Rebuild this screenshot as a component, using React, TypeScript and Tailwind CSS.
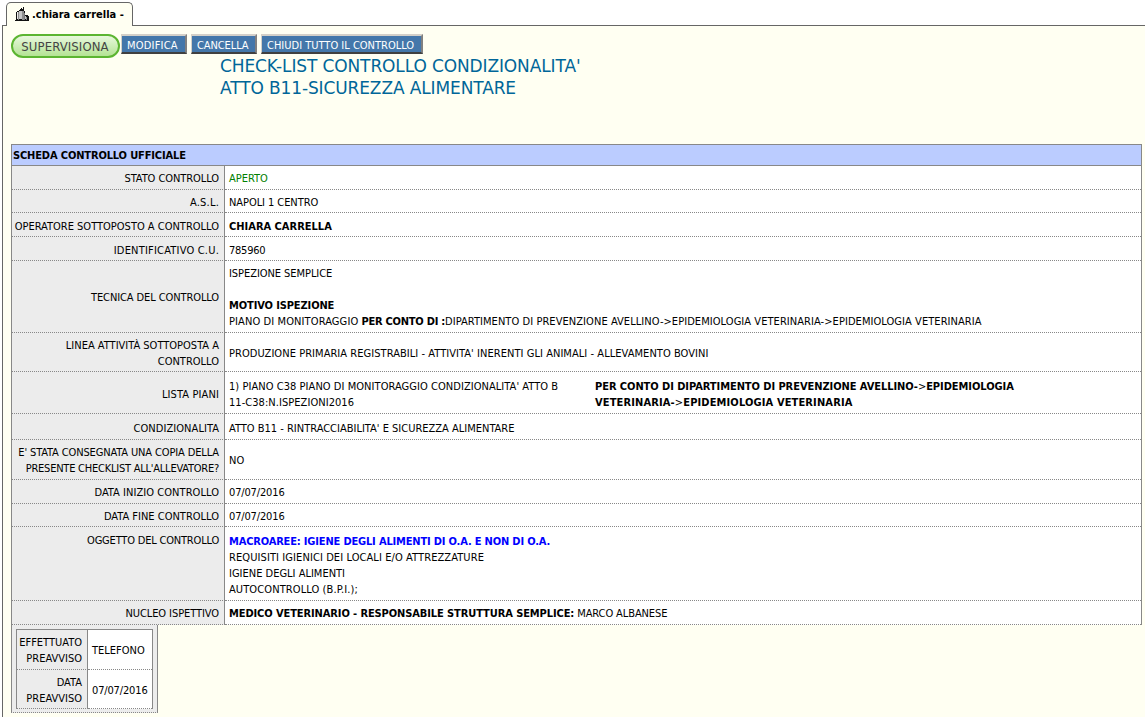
import type { ReactNode } from "react";

type RowProps = { label: ReactNode; h: string; children: ReactNode; top?: boolean; pad?: string };

function Row({ label, h, children, top, pad = "pt-[2px]" }: RowProps) {
  return (
    <div className={`flex ${h}`}>
      <div
        className={`flex w-[213px] shrink-0 justify-end border-b border-r border-b-[#888888] border-r-[#888888] bg-[#ececec] pr-[5px] text-right [border-bottom-style:dotted] ${top ? "items-start pt-[6px]" : `items-center ${pad}`}`}
      >
        <div>{label}</div>
      </div>
      <div className={`flex grow items-center border-b border-dotted border-b-[#888888] bg-white pl-[4px] ${pad}`}>{children}</div>
    </div>
  );
}

function Action({ w, children }: { w: string; children: ReactNode }) {
  return (
    <button
      className={`flex h-[20px] shrink-0 items-center whitespace-nowrap border-b-2 border-l border-r-2 border-t-2 border-t-[#d4d0c8] border-l-[#d4d0c8] border-r-[#808080] border-b-[#404040] bg-[#4477aa] pl-[5px] pt-[3px] text-white ${w}`}
    >
      {children}
    </button>
  );
}

export default function App() {
  return (
    <div className="h-[717px] w-[1145px] overflow-hidden bg-white font-['DejaVu_Sans_Condensed','DejaVu_Sans',sans-serif] text-[11px] leading-[16px] text-black">
      <div className="flex h-[26px] items-end pl-[2px]">
        <div className="h-px w-[4px] bg-[#666666]" />
        <div className="flex h-[24px] w-[127px] items-center gap-px whitespace-nowrap rounded-t-[5px] border border-b-0 border-[#666666] bg-[#fffff2] pl-[8px] font-bold">
          <svg width="16" height="16" viewBox="0 0 16 16" shapeRendering="crispEdges">
            <path d="M0 13h1V6l1-2h2V3l1-1h1V1h1v1h1V0h1v3l1 2v3h3l1 2v4H0z" fill="#111" />
            <path d="M2 5h1v7H2z" fill="#e8e8e8" />
            <path d="M3 5h1v8H3zM7 4h2v9H7zM11 10h1v3h-1z" fill="#8c8c8c" />
            <path d="M4 4h3v8H4zM10 9h1v3h-1z" fill="#c4c4c4" />
            <path d="M9 6h1v7H9z" fill="#777" />
          </svg>
          <span>.chiara carrella -</span>
        </div>
        <div className="h-px grow bg-[#666666]" />
      </div>
      <div className="ml-[2px] h-[691px] border-l border-[#666666] bg-[#fffff2] pl-[8px] pt-[8px]">
        <div className="flex h-[24px] items-start">
          <button className="mr-px flex h-[24px] w-[109px] shrink-0 items-center justify-center rounded-full border-2 border-[#5cb531] bg-linear-to-b from-[#e8f8dc] to-[#b4e394] pr-px pt-[2px] text-[13px] tracking-[0.1px] text-[#444444]">
            SUPERVISIONA
          </button>
          <Action w="w-[66px] mr-[4px] tracking-[0.2px]">MODIFICA</Action>
          <Action w="w-[66px] mr-[4px] -tracking-[0.1px]">CANCELLA</Action>
          <Action w="w-[162px]">CHIUDI TUTTO IL CONTROLLO</Action>
        </div>
        <div className="-mt-[3px] h-[89px] pl-[209px] font-['DejaVu_Sans',sans-serif] text-[17px] leading-[22px] -tracking-[0.12px] text-[#006699]">
          CHECK-LIST CONTROLLO CONDIZIONALITA'
          <br />
          ATTO B11-SICUREZZA ALIMENTARE
        </div>
        <div className="w-[1131px] border-x border-t border-[#888888]">
          <div className="flex h-[21px] items-center border-b border-[#888888] bg-[#bbccff] pl-px pt-px font-bold -tracking-[0.14px]">
            SCHEDA CONTROLLO UFFICIALE
          </div>
          <Row h="h-[24px]" label={<span className="-tracking-[0.07px]">STATO CONTROLLO</span>}>
            <span className="text-[#008000]">APERTO</span>
          </Row>
          <Row h="h-[23px]" pad="pt-[3px]" label={<span className="tracking-[0.2px]">A.S.L.</span>}>
            <span className="-tracking-[0.07px]">NAPOLI 1 CENTRO</span>
          </Row>
          <Row h="h-[24px]" pad="pt-[4px]" label="OPERATORE SOTTOPOSTO A CONTROLLO">
            <b>CHIARA CARRELLA</b>
          </Row>
          <Row h="h-[24px]" pad="pt-[4px]" label={<span className="tracking-[0.2px]">IDENTIFICATIVO C.U.</span>}>
            <span className="-tracking-[0.25px]">785960</span>
          </Row>
          <Row h="h-[72px]" label={<span className="-tracking-[0.1px]">TECNICA DEL CONTROLLO</span>}>
            <div>
              <div className="-tracking-[0.06px]">ISPEZIONE SEMPLICE</div>
              <div className="mt-[16px] font-bold -tracking-[0.12px]">MOTIVO ISPEZIONE</div>
              <div className="whitespace-nowrap tracking-[0.06px]">
                <span className="tracking-[0.1px]">PIANO DI MONITORAGGIO </span>
                <b className="-tracking-[0.25px]">PER CONTO DI :</b>
                DIPARTIMENTO DI PREVENZIONE AVELLINO-&gt;EPIDEMIOLOGIA VETERINARIA-&gt;EPIDEMIOLOGIA VETERINARIA
              </div>
            </div>
          </Row>
          <Row h="h-[39px]" pad="pt-[4px]" label={<>LINEA ATTIVITÀ SOTTOPOSTA A<br />CONTROLLO</>}>
            <span className="tracking-[0.05px]">PRODUZIONE PRIMARIA REGISTRABILI - ATTIVITA' INERENTI GLI ANIMALI - ALLEVAMENTO BOVINI</span>
          </Row>
          <Row h="h-[42px]" pad="pt-[4px]" label={<span className="tracking-[0.12px]">LISTA PIANI</span>}>
            <div className="w-[366px] tracking-[0.05px]">
              1) PIANO C38 PIANO DI MONITORAGGIO CONDIZIONALITA' ATTO B
              <br />
              11-C38:N.ISPEZIONI2016
            </div>
            <div className="font-bold">
              <div className="-tracking-[0.06px]">
                PER CONTO DI DIPARTIMENTO DI PREVENZIONE AVELLINO-<span className="font-normal">&gt;</span>EPIDEMIOLOGIA
              </div>
              <div className="tracking-[0.13px]">
                VETERINARIA-<span className="font-normal">&gt;</span>EPIDEMIOLOGIA VETERINARIA
              </div>
            </div>
          </Row>
          <Row h="h-[26px]" pad="pt-[4px]" label={<span className="tracking-[0.06px]">CONDIZIONALITA</span>}>
            ATTO B11 - RINTRACCIABILITA' E SICUREZZA ALIMENTARE
          </Row>
          <Row
            h="h-[40px]"
            label={
              <>
                <div className="-tracking-[0.13px]">E' STATA CONSEGNATA UNA COPIA DELLA</div>
                <div className="-tracking-[0.23px]">PRESENTE CHECKLIST ALL'ALLEVATORE?</div>
              </>
            }
          >
            NO
          </Row>
          <Row h="h-[24px]" label={<span className="tracking-[0.05px]">DATA INIZIO CONTROLLO</span>}>
            <span className="-tracking-[0.15px]">07/07/2016</span>
          </Row>
          <Row h="h-[23px]" pad="pt-[3px]" label="DATA FINE CONTROLLO">
            <span className="-tracking-[0.15px]">07/07/2016</span>
          </Row>
          <Row h="h-[74px]" top pad="pt-[4px]" label={<span className="-tracking-[0.19px]">OGGETTO DEL CONTROLLO</span>}>
            <div>
              <div className="font-bold -tracking-[0.17px] text-[#0000ff]">MACROAREE: IGIENE DEGLI ALIMENTI DI O.A. E NON DI O.A.</div>
              <div className="tracking-[0.09px]">REQUISITI IGIENICI DEI LOCALI E/O ATTREZZATURE</div>
              <div>IGIENE DEGLI ALIMENTI</div>
              <div className="tracking-[0.1px]">AUTOCONTROLLO (B.P.I.);</div>
            </div>
          </Row>
          <Row h="h-[24px]" label={<span className="-tracking-[0.08px]">NUCLEO ISPETTIVO</span>}>
            <div className="-tracking-[0.1px]">
              <b>MEDICO VETERINARIO - RESPONSABILE STRUTTURA SEMPLICE:</b> MARCO ALBANESE
            </div>
          </Row>
        </div>
        <div className="h-[88px] w-[147px] border-x border-b border-[#888888] bg-[#ececec] pl-[4px] pt-[4px] [border-bottom-style:dotted]">
          <div className="w-[137px] border-x border-t border-[#888888]">
            <div className="flex h-[40px]">
              <div className="w-[71px] shrink-0 border-b border-r border-[#888888] pr-[5px] pt-[5px] text-right [border-bottom-style:dotted]">
                <div>EFFETTUATO</div>
                <div>PREAVVISO</div>
              </div>
              <div className="flex grow items-center border-b border-dotted border-[#888888] bg-white pl-[4px] pt-[2px]">TELEFONO</div>
            </div>
            <div className="flex h-[39px]">
              <div className="w-[71px] shrink-0 border-b border-r border-[#888888] pr-[5px] pt-[5px] text-right [border-bottom-style:dotted]">
                <div>DATA</div>
                <div>PREAVVISO</div>
              </div>
              <div className="flex grow items-center border-b border-dotted border-[#888888] bg-white pl-[4px] pt-[4px]">
                <span className="-tracking-[0.15px]">07/07/2016</span>
              </div>
            </div>
          </div>
        </div>
      </div>
    </div>
  );
}
